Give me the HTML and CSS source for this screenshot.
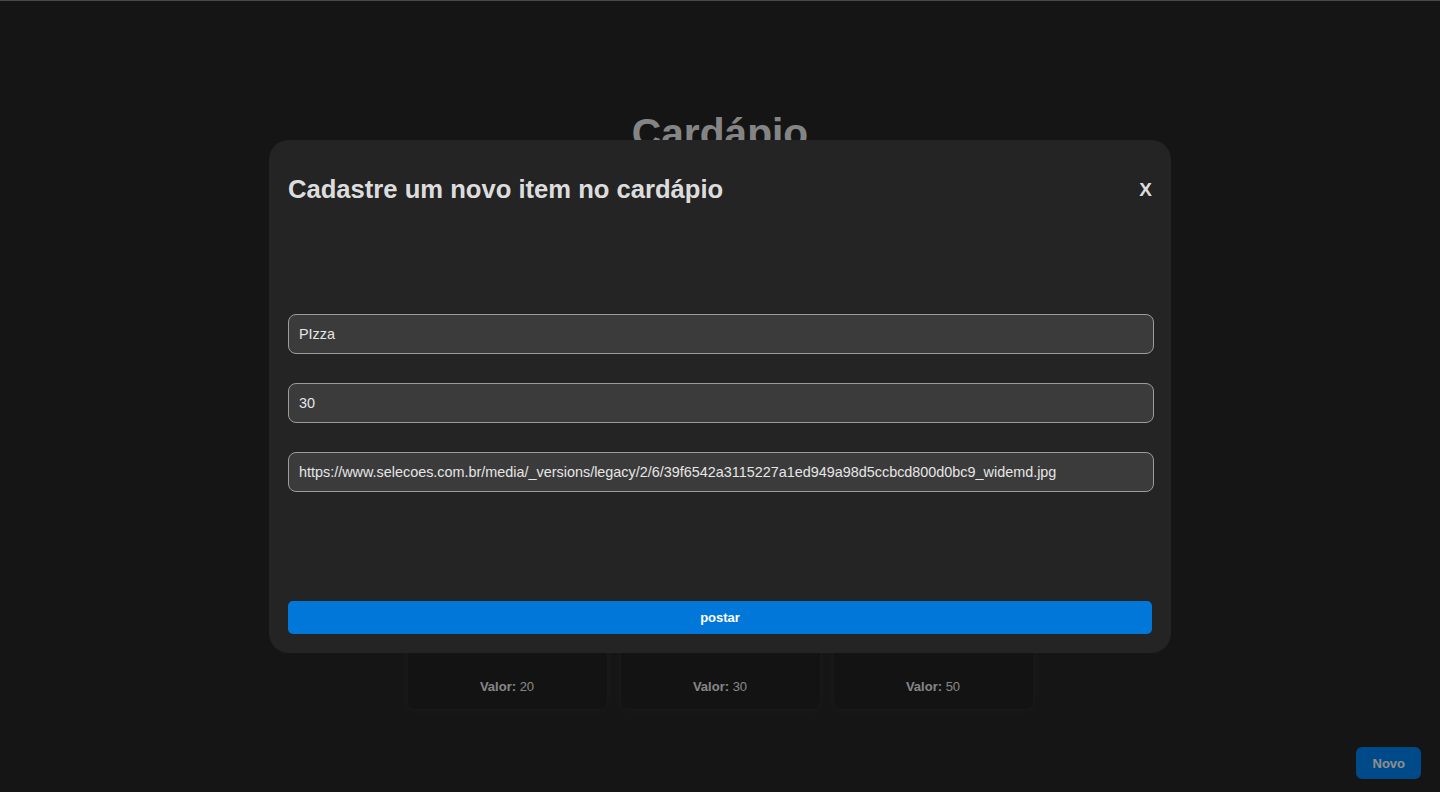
FILE: index.html
```html
<!DOCTYPE html>
<html lang="pt-BR">
<head>
<meta charset="utf-8">
<title>Cardápio</title>
<link rel="stylesheet" href="styles.css">
</head>
<body>
  <main class="page">
    <h1 class="page-title">Cardápio</h1>
    <section class="card-grid">
      <article class="card">
        <div class="card-image"></div>
        <h2 class="card-name">Hambúrguer</h2>
        <p class="card-price"><b>Valor:</b> 20</p>
      </article>
      <article class="card">
        <div class="card-image"></div>
        <h2 class="card-name">Pizza</h2>
        <p class="card-price"><b>Valor:</b> 30</p>
      </article>
      <article class="card">
        <div class="card-image"></div>
        <h2 class="card-name">Lasanha</h2>
        <p class="card-price"><b>Valor:</b> 50</p>
      </article>
    </section>
    <button class="new-button">Novo</button>
  </main>

  <div class="overlay">
    <div class="modal">
      <div class="modal-header">
        <h2 class="modal-title">Cadastre um novo item no cardápio</h2>
        <button class="close-button">X</button>
      </div>
      <form class="modal-form">
        <input class="field" type="text" value="PIzza">
        <input class="field" type="text" value="30">
        <input class="field" type="text" value="https://www.selecoes.com.br/media/_versions/legacy/2/6/39f6542a3115227a1ed949a98d5ccbcd800d0bc9_widemd.jpg">
      </form>
      <button class="submit-button">postar</button>
    </div>
  </div>
</body>
</html>
```

FILE: styles.css
```css
* {
  box-sizing: border-box;
}

html, body {
  margin: 0;
  height: 100%;
}

body {
  background: #242424;
  border-top: 1px solid #7a7a7a;
  font-family: "Liberation Sans", Arial, sans-serif;
  color: rgba(255, 255, 255, 0.87);
  overflow: hidden;
}

.page {
  display: flex;
  flex-direction: column;
  align-items: center;
  height: 100%;
}

.page-title {
  margin: 109px 0 0;
  font-size: 40.7px;
  line-height: 46px;
  font-weight: 700;
  color: rgba(255, 255, 255, 0.87);
}

.card-grid {
  display: flex;
  gap: 14px;
  margin-top: 324px;
}

.card {
  width: 199px;
  background: #212121;
  border-radius: 8px;
  box-shadow: 0 0 12px rgba(255, 255, 255, 0.05);
  padding: 12px 12px 10px;
  display: flex;
  flex-direction: column;
  align-items: center;
}

.card-image {
  width: 100%;
  height: 120px;
  border-radius: 6px;
  background: #2f2f2f;
}

.card-name {
  margin: 10px 0 0;
  font-size: 16px;
  line-height: 18px;
}

.card-price {
  margin: 39px 0 5px;
  font-size: 13px;
  line-height: 15px;
  color: rgba(255, 255, 255, 0.87);
}

.new-button {
  position: fixed;
  right: 19px;
  bottom: 13px;
  height: 32px;
  padding: 0 16px 0 17px;
  border: none;
  border-radius: 6px;
  background: #007ce6;
  color: #eeeeee;
  font-family: "Liberation Sans", Arial, sans-serif;
  font-weight: 700;
  font-size: 13px;
}

.overlay {
  position: fixed;
  inset: 0;
  background: rgba(0, 0, 0, 0.4);
  display: flex;
  align-items: center;
  justify-content: center;
}

.modal {
  width: 902px;
  height: 513px;
  background: #242424;
  border-radius: 20px;
  padding: 20px 19px 19px;
  display: flex;
  flex-direction: column;
  justify-content: space-between;
}

.modal-header {
  margin-top: 15px;
  display: flex;
  align-items: center;
  justify-content: space-between;
}

.modal-title {
  margin: 0;
  font-size: 25.6px;
  line-height: 29px;
  font-weight: 700;
  color: rgba(255, 255, 255, 0.87);
}

.close-button {
  background: none;
  border: none;
  padding: 0;
  font-family: "Liberation Sans", Arial, sans-serif;
  font-weight: 700;
  font-size: 19px;
  color: rgba(255, 255, 255, 0.87);
  margin-top: 2px;
}

.modal-form {
  margin-top: 1px;
  display: flex;
  flex-direction: column;
  gap: 29px;
}

.field {
  width: calc(100% + 2px);
  height: 40px;
  padding: 0 10px;
  background: #3b3b3b;
  border: 1px solid #9c9c9c;
  border-radius: 8px;
  color: #e6e6e6;
  font-family: "Liberation Sans", Arial, sans-serif;
  font-size: 14.4px;
}

.submit-button {
  width: 100%;
  height: 33px;
  border: none;
  border-radius: 5px;
  background: #0077d9;
  color: #ffffff;
  font-family: "Liberation Sans", Arial, sans-serif;
  font-weight: 700;
  font-size: 13px;
}
```
